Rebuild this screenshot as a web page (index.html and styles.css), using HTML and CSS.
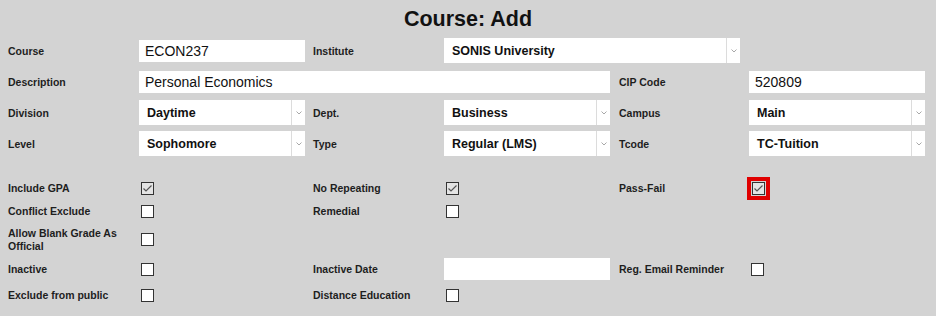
FILE: index.html
```html
<!DOCTYPE html>
<html>
<head>
<meta charset="utf-8">
<title>Course: Add</title>
<link rel="stylesheet" href="styles.css">
</head>
<body>
<div class="page">
  <h1 class="title">Course: Add</h1>

  <div class="grid top">
    <div class="label">Course</div>
    <div class="input">ECON237</div>
    <div class="label pad">Institute</div>
    <div class="select wide"><span class="val">SONIS University</span><span class="arrow"><svg width="6" height="4" viewBox="0 0 6 4"><path d="M0.5 0.5 L3 3 L5.5 0.5" fill="none" stroke="#a8a8a8" stroke-width="1"/></svg></span></div>
    <div class="cell"></div>

    <div class="label">Description</div>
    <div class="input span3">Personal Economics</div>
    <div class="label pad2">CIP Code</div>
    <div class="input">520809</div>

    <div class="label">Division</div>
    <div class="select"><span class="val">Daytime</span><span class="arrow"><svg width="6" height="4" viewBox="0 0 6 4"><path d="M0.5 0.5 L3 3 L5.5 0.5" fill="none" stroke="#a8a8a8" stroke-width="1"/></svg></span></div>
    <div class="label pad">Dept.</div>
    <div class="select"><span class="val">Business</span><span class="arrow"><svg width="6" height="4" viewBox="0 0 6 4"><path d="M0.5 0.5 L3 3 L5.5 0.5" fill="none" stroke="#a8a8a8" stroke-width="1"/></svg></span></div>
    <div class="label pad2">Campus</div>
    <div class="select"><span class="val">Main</span><span class="arrow"><svg width="6" height="4" viewBox="0 0 6 4"><path d="M0.5 0.5 L3 3 L5.5 0.5" fill="none" stroke="#a8a8a8" stroke-width="1"/></svg></span></div>

    <div class="label">Level</div>
    <div class="select"><span class="val">Sophomore</span><span class="arrow"><svg width="6" height="4" viewBox="0 0 6 4"><path d="M0.5 0.5 L3 3 L5.5 0.5" fill="none" stroke="#a8a8a8" stroke-width="1"/></svg></span></div>
    <div class="label pad">Type</div>
    <div class="select"><span class="val">Regular (LMS)</span><span class="arrow"><svg width="6" height="4" viewBox="0 0 6 4"><path d="M0.5 0.5 L3 3 L5.5 0.5" fill="none" stroke="#a8a8a8" stroke-width="1"/></svg></span></div>
    <div class="label pad2">Tcode</div>
    <div class="select"><span class="val">TC-Tuition</span><span class="arrow"><svg width="6" height="4" viewBox="0 0 6 4"><path d="M0.5 0.5 L3 3 L5.5 0.5" fill="none" stroke="#a8a8a8" stroke-width="1"/></svg></span></div>
  </div>

  <div class="grid checks">
    <div class="label">Include GPA</div>
    <div class="cell"><span class="cb checked"><svg width="11" height="11" viewBox="0 0 11 11"><path d="M1.5 5.5 L4 8 L9.5 2.5" fill="none" stroke="#555" stroke-width="1.2"/></svg></span></div>
    <div class="label pad">No Repeating</div>
    <div class="cell"><span class="cb checked"><svg width="11" height="11" viewBox="0 0 11 11"><path d="M1.5 5.5 L4 8 L9.5 2.5" fill="none" stroke="#555" stroke-width="1.2"/></svg></span></div>
    <div class="label pad2">Pass-Fail</div>
    <div class="cell"><span class="highlight"><span class="cb checked"><svg width="11" height="11" viewBox="0 0 11 11"><path d="M1.5 5.5 L4 8 L9.5 2.5" fill="none" stroke="#555" stroke-width="1.2"/></svg></span></span></div>

    <div class="label">Conflict Exclude</div>
    <div class="cell"><span class="cb"></span></div>
    <div class="label pad">Remedial</div>
    <div class="cell"><span class="cb"></span></div>
    <div class="cell"></div>
    <div class="cell"></div>

    <div class="label two">Allow Blank Grade As Official</div>
    <div class="cell"><span class="cb"></span></div>
    <div class="cell"></div>
    <div class="cell"></div>
    <div class="cell"></div>
    <div class="cell"></div>

    <div class="label">Inactive</div>
    <div class="cell"><span class="cb"></span></div>
    <div class="label pad">Inactive Date</div>
    <div class="input"></div>
    <div class="label pad2">Reg. Email Reminder</div>
    <div class="cell"><span class="cb"></span></div>

    <div class="label">Exclude from public</div>
    <div class="cell"><span class="cb"></span></div>
    <div class="label pad">Distance Education</div>
    <div class="cell"><span class="cb"></span></div>
  </div>
</div>
</body>
</html>
```

FILE: styles.css
```css
html, body {
  margin: 0;
  padding: 0;
  background: #d3d3d3;
}

.page {
  width: 936px;
  height: 316px;
  background: #d3d3d3;
  font-family: "Liberation Sans", Arial, sans-serif;
  color: #1c1c1c;
  padding: 7px 0 0 8px;
  box-sizing: border-box;
}

.title {
  margin: 0 0 7px -8px;
  font-size: 21.5px;
  line-height: 24px;
  font-weight: bold;
  text-align: center;
  color: #111;
}

.grid {
  display: grid;
  grid-template-columns: 131px 166px 139px 166px 139px 176px;
  align-items: center;
}

.top {
  grid-auto-rows: 25px;
  row-gap: 6px;
}

.top .label {
  padding-top: 2px;
}

.checks {
  margin-top: 21px;
  grid-template-rows: 23px 23px 32px 28px 25px;
}

.label {
  font-size: 10.5px;
  font-weight: bold;
  line-height: 13px;
  color: #1e1e1e;
  padding-right: 6px;
}

.label.pad { padding-left: 8px; }
.label.pad2 { padding-left: 9px; }

.label.two {
  padding-top: 1px;
}

.input {
  height: 22px;
  background: #fff;
  font-size: 14px;
  line-height: 22px;
  padding-left: 6px;
  color: #111;
  box-sizing: border-box;
}

.span3 { grid-column: span 3; }

.select {
  height: 25px;
  background: #fff;
  display: flex;
  align-items: stretch;
  box-sizing: border-box;
}

.select.wide {
  width: 296px;
  grid-column: span 2;
}

.select .val {
  flex: 1;
  font-size: 12.5px;
  font-weight: bold;
  line-height: 26px;
  padding-left: 8px;
  color: #111;
  white-space: nowrap;
}

.select .arrow {
  width: 13px;
  border-left: 1px solid #dcdcdc;
  display: flex;
  align-items: center;
  justify-content: center;
}

.cell {
  display: flex;
  align-items: center;
}

.cb {
  display: inline-flex;
  align-items: center;
  justify-content: center;
  width: 13px;
  height: 13px;
  box-sizing: border-box;
  border: 1px solid #333;
  background: #fff;
  margin-left: 2px;
}

.cb.checked {
  background: #e4e4e4;
}

.highlight {
  display: inline-flex;
  border: 4px solid #e00000;
  padding: 1px;
  margin-left: -2px;
}

.highlight .cb {
  margin-left: 0;
}
```
